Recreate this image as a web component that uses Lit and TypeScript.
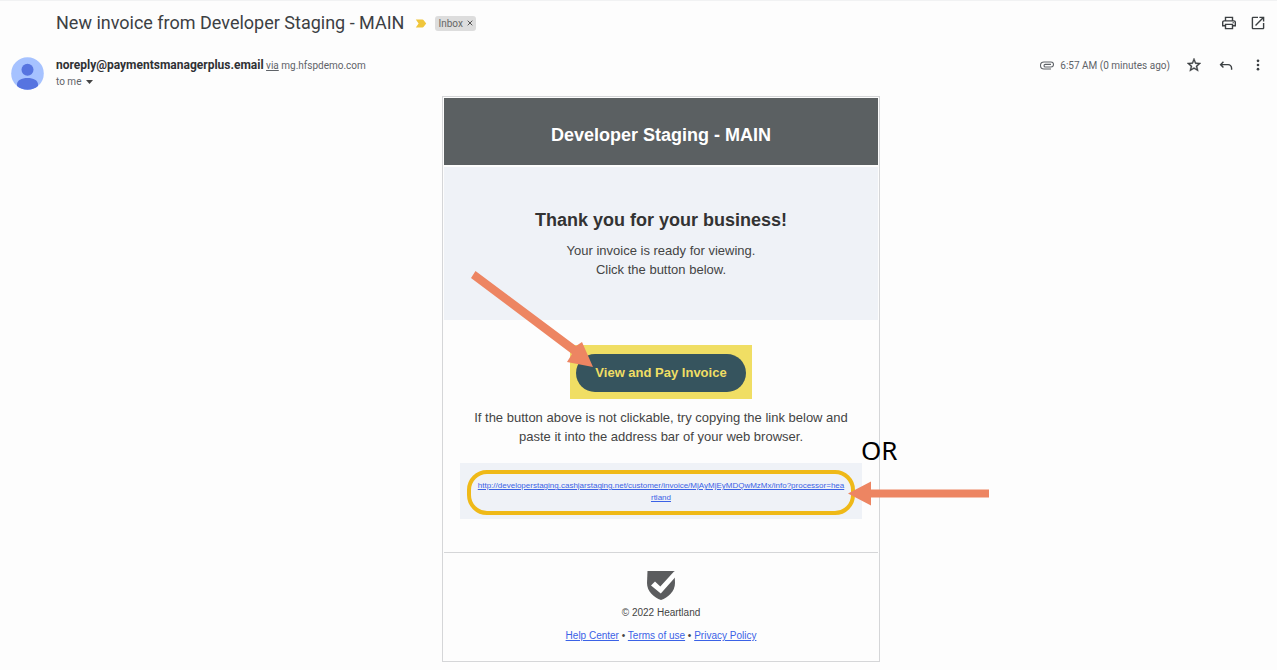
import { LitElement, html, css } from "lit";
import { customElement, property } from "lit/decorators.js";

@customElement("mail-header")
class MailHeader extends LitElement {
  @property() subject = "";
  @property() sender = "";
  @property() via = "";
  @property() time = "";

  static styles = css`
    :host {
      display: block;
      font-family: Roboto, sans-serif;
      color: #5f6368;
    }
    button {
      border: 0;
      padding: 0;
      background: none;
      color: inherit;
      font: inherit;
      display: flex;
      align-items: center;
      cursor: pointer;
    }
    svg {
      display: block;
      flex: none;
    }
    .subject-row {
      display: flex;
      align-items: center;
      height: 44px;
      padding: 0 12px 0 56px;
    }
    h1 {
      margin: 0;
      font: 400 18px/24px Roboto, sans-serif;
      color: #3c4043;
    }
    .important {
      margin: 0 8px 0 11px;
    }
    .label {
      height: 15px;
      padding: 0 3px;
      gap: 4px;
      border-radius: 3px;
      background: #dddddd;
      color: #666666;
      font-size: 10px;
      line-height: 15px;
    }
    .actions {
      display: flex;
      gap: 15px;
      margin-left: auto;
      color: #3c4043;
    }
    .sender-row {
      display: flex;
      align-items: flex-start;
      padding: 12px 12px 0 11px;
    }
    .avatar {
      margin-right: 12px;
    }
    .from {
      font-size: 10px;
      line-height: 16px;
    }
    .from strong {
      font-size: 12px;
      font-weight: 700;
      color: #303134;
    }
    .from a {
      color: inherit;
    }
    .to {
      gap: 5px;
      line-height: 16px;
    }
    .meta {
      display: flex;
      align-items: center;
      height: 16px;
      margin-left: auto;
      font-size: 10px;
    }
    .time {
      margin: 0 17px 0 6px;
    }
    .tools {
      display: flex;
      gap: 18px;
      color: #3c4043;
    }
  `;

  render() {
    return html`
      <div class="subject-row">
        <h1>${this.subject}</h1>
        <button class="important" aria-label="Important">
          <svg width="12" height="9" viewBox="0 0 12 9"><path fill="#f0c63c" d="M0.8 0.5H7.4Q8.2.5 8.7 1.2L11.2 4.5 8.7 7.8Q8.2 8.5 7.4 8.5H.8L3.6 4.5Z" /></svg>
        </button>
        <button class="label">
          Inbox
          <svg width="6" height="6" viewBox="0 0 6 6" stroke="#555" stroke-width="1"><path d="M.7.7 5.3 5.3M5.3.7.7 5.3" /></svg>
        </button>
        <div class="actions">
          <button aria-label="Print">
            <svg width="14" height="14" viewBox="2 2 20 20" fill="currentColor"><path d="M19 8h-1V3H6v5H5c-1.660 0-3 1.340-3 3v6h4v4h12v-4h4v-6c0-1.660-1.340-3-3-3zM8 5h8v3H8V5zm8 14H8v-4h8v4zm2-4v-2H6v2H4v-4c0-.55.45-1 1-1h14c.55 0 1 .45 1 1v4h-2z" /><circle cx="18" cy="11.500" r="1" /></svg>
          </button>
          <button aria-label="Open in new window">
            <svg width="14" height="14" viewBox="2 2 20 20" fill="currentColor"><path d="M19 19H5V5h7V3H5c-1.110 0-2 .9-2 2v14c0 1.100.89 2 2 2h14c1.100 0 2-.9 2-2v-7h-2v7zM14 3v2h3.590l-9.830 9.830 1.410 1.410L19 6.410V10h2V3h-7z" /></svg>
          </button>
        </div>
      </div>
      <div class="sender-row">
        <svg class="avatar" width="33" height="33" viewBox="0 0 33 33">
          <circle cx="16.500" cy="16.500" r="16.300" fill="#a6c2ff" />
          <circle cx="16.500" cy="12.800" r="6" fill="#5674e0" />
          <path fill="#5674e0" d="M6 29V27.500C6 23.300 10.500 21 16.500 21S27 23.300 27 27.500V29C24 31.500 20.500 32.800 16.500 32.800S9 31.500 6 29Z" />
        </svg>
        <div class="from">
          <div><strong>${this.sender}</strong> <a href="#via">via</a> ${this.via}</div>
          <button class="to">
            to me
            <svg width="7" height="4" viewBox="0 0 7 4"><path fill="#444" d="M0 0H7L3.500 4Z" /></svg>
          </button>
        </div>
        <div class="meta">
          <svg width="14" height="9" viewBox="0 0 14 9" fill="none" stroke="#5f6368" stroke-width="1.100"><path d="M11 8H4A3.500 3.500 0 0 1 4 1H11A2.500 2.500 0 0 1 11 6H5.300A1.300 1.300 0 0 1 5.300 3.400H11" /></svg>
          <span class="time">${this.time}</span>
          <div class="tools">
            <button aria-label="Star">
              <svg width="14" height="14" viewBox="2 2 20 20" fill="currentColor" stroke="currentColor" stroke-width=".5"><path d="M22 9.240l-7.190-.62L12 2 9.190 8.630 2 9.240l5.460 4.730L5.820 21 12 17.270 18.180 21l-1.630-7.030L22 9.240zM12 15.400l-3.760 2.270 1-4.280-3.320-2.880 4.380-.38L12 6.100l1.710 4.040 4.380.38-3.320 2.880 1 4.280L12 15.400z" /></svg>
            </button>
            <button aria-label="Reply">
              <svg width="14" height="14" viewBox="2 2 20 20" fill="currentColor"><path d="M7.640 16.290 2.850 11.500l4.790-4.790 1.410 1.410L6.670 10.500H15c3.300 0 6 2.700 6 6v2.300h-2v-2.300c0-2.200-1.800-4-4-4H6.670l2.380 2.380z" /></svg>
            </button>
            <button aria-label="More">
              <svg width="14" height="14" viewBox="2 2 20 20" fill="currentColor"><circle cx="12" cy="6" r="1.900" /><circle cx="12" cy="12" r="1.900" /><circle cx="12" cy="18" r="1.900" /></svg>
            </button>
          </div>
        </div>
      </div>
    `;
  }
}

@customElement("invoice-mail")
class InvoiceMail extends LitElement {
  @property() company = "";
  @property() link = "";

  static styles = css`
    :host {
      display: block;
      position: relative;
      box-sizing: border-box;
      width: 100%;
      max-width: 438px;
      padding: 1px;
      border: 1px solid #d5d6d8;
      font: 13px/19px "Liberation Sans", Arial, sans-serif;
      color: #444444;
      text-align: center;
    }
    a {
      color: #3b62e6;
    }
    h2,
    h3,
    p {
      margin: 0;
    }
    .banner {
      padding: 25px 16px 18px;
      background: #5b6062;
      color: #ffffff;
    }
    .banner h2 {
      font-size: 18px;
      line-height: 24px;
    }
    .intro {
      margin-top: 2px;
      padding: 41px 16px;
      background: #eff2f7;
    }
    .intro h3 {
      margin-bottom: 9px;
      font-size: 18px;
      line-height: 24px;
      color: #333333;
    }
    .body {
      display: flex;
      flex-direction: column;
      align-items: center;
      padding: 25px 16px 33px;
    }
    .highlight {
      padding: 9px 6px 7px;
      background: #f0de64;
    }
    .pay {
      display: block;
      height: 38px;
      padding: 0 19px;
      border: 0;
      border-radius: 19px;
      background: #36545e;
      color: #f0de64;
      font: bold 13px/38px "Liberation Sans", Arial, sans-serif;
      cursor: pointer;
    }
    .hint {
      margin: 9px 0 17px;
    }
    .link-box {
      align-self: stretch;
      padding: 7px 7px 4px;
      background: #eff2f7;
    }
    .ring {
      padding: 6px 6px 7px;
      border: 4px solid #efb918;
      border-radius: 20px;
      font-size: 8px;
      line-height: 12px;
      word-break: break-all;
    }
    footer {
      padding: 18px 16px 17px;
      border-top: 1px solid #d5d6d8;
      font-size: 10px;
      line-height: 14px;
    }
    .shield {
      display: block;
      margin: 0 auto 6px;
    }
    .links {
      margin-top: 9px;
    }
    .arrows {
      position: absolute;
      left: 0;
      top: 0;
      overflow: visible;
      pointer-events: none;
    }
    .or {
      position: absolute;
      left: 418px;
      top: 335px;
      font: 26px/36px "Noto Sans", "Open Sans", sans-serif;
      color: #000000;
    }
  `;

  render() {
    return html`
      <div class="banner"><h2>${this.company}</h2></div>
      <div class="intro">
        <h3>Thank you for your business!</h3>
        <p>Your invoice is ready for viewing.<br />Click the button below.</p>
      </div>
      <div class="body">
        <div class="highlight"><button class="pay">View and Pay Invoice</button></div>
        <p class="hint">
          If the button above is not clickable, try copying the link below and<br />paste it into the address bar of your web browser.
        </p>
        <div class="link-box">
          <div class="ring"><a href=${this.link}>${this.link}</a></div>
        </div>
      </div>
      <footer>
        <svg class="shield" width="28" height="29" viewBox="0 0 28 29">
          <path fill="#5b5c5e" d="M0.500 0H27.500L28 12C28 20.500 21 26.500 14 29C7 26.500 0 20.500 0 12Z" />
          <path fill="#fff" d="M4 14.500 8 10.500 13.300 15.500 27 0.500H28V6.500L13.800 22.500Z" />
        </svg>
        <p>© 2022 Heartland</p>
        <p class="links">
          <a href="#help">Help Center</a> • <a href="#terms">Terms of use</a> • <a href="#privacy">Privacy Policy</a>
        </p>
      </footer>
      <svg class="arrows" width="1" height="1" fill="#ed8562" aria-hidden="true">
        <path d="M32.500 174 133 249 139 245 150 270 124 265 129 257 28 181Z" />
        <path d="M546 392.500V400.500H428V408.500L405 396.500 428 384.500V392.500Z" />
      </svg>
      <span class="or">OR</span>
    `;
  }
}

@customElement("app-root")
class AppRoot extends LitElement {
  static styles = css`
    :host {
      display: block;
      box-sizing: border-box;
      min-height: 100vh;
      border-top: 1px solid #f1f2f3;
      background: #fdfdfd;
    }
    main {
      display: flex;
      justify-content: center;
      padding: 6px 0 6px 45px;
    }
  `;

  render() {
    return html`
      <mail-header
        subject="New invoice from Developer Staging - MAIN"
        sender="noreply@paymentsmanagerplus.email"
        via="mg.hfspdemo.com"
        time="6:57 AM (0 minutes ago)"
      ></mail-header>
      <main>
        <invoice-mail
          company="Developer Staging - MAIN"
          link="http://developerstaging.cashjarstaging.net/customer/invoice/MjAyMjEyMDQwMzMx/info?processor=heartland"
        ></invoice-mail>
      </main>
    `;
  }
}
